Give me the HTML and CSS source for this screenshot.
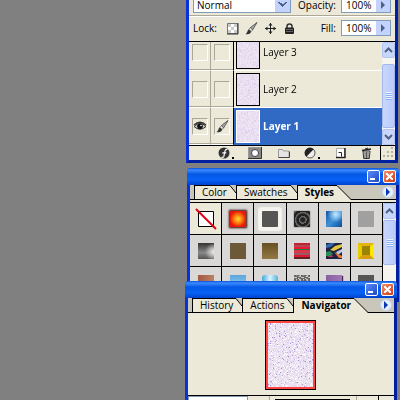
FILE: index.html
```html
<!DOCTYPE html>
<html lang="en">
<head>
  <meta charset="UTF-8">
  <meta name="viewport" content="width=device-width, initial-scale=1.0">
  <title>Palettes</title>
  <link rel="stylesheet" href="styles.css">
</head>
<body>
  <!-- shared icons -->
  <svg class="defs" width="0" height="0" aria-hidden="true">
    <defs>
      <symbol id="up" viewBox="0 0 9 6"><path d="M1 5l3.5-3.5L8 5" fill="none" stroke="#4d6185" stroke-width="2"/></symbol>
      <symbol id="down" viewBox="0 0 9 6"><path d="M1 1l3.5 3.5L8 1" fill="none" stroke="#4d6185" stroke-width="2"/></symbol>
      <symbol id="right" viewBox="0 0 5 8"><path d="M0 0l4 4-4 4z" fill="currentColor"/></symbol>
      <symbol id="brush" viewBox="0 0 13 13">
        <path d="M12 .5L5.500 5.500l2 2.500z" fill="#aaa" stroke="#444" stroke-width=".8"/>
        <path d="M5.500 5.500L4 7.500l2 2 1.500-1.500z" fill="#f4f4f4" stroke="#555" stroke-width=".8"/>
        <path d="M4 7.500C2 8 3 10.500.5 12c2.500.8 5.500 0 5.500-2.500z" fill="#333"/>
      </symbol>
      <symbol id="corner" viewBox="0 0 6 14"><path d="M0 0l6 8v6H0z" fill="#ece9d8"/><path d="M0 .5L6 8" fill="none" stroke="#000"/></symbol>
      <symbol id="slope" viewBox="0 0 14 15"><path d="M0 0l14 15H0z" fill="#ece9d8"/><path d="M0 .5L14 14.500" fill="none" stroke="#000"/></symbol>
    </defs>
  </svg>

  <main class="workspace">
    <section class="palette layers">
      <div class="row blend-row">
        <select class="blend" aria-label="Blend mode"><option>Normal</option></select>
        <label for="opacity">Opacity:</label>
        <div class="spin">
          <input id="opacity" type="text" value="100%">
          <button aria-label="Opacity slider"><svg width="5" height="8"><use href="#right"/></svg></button>
        </div>
      </div>
      <div class="row lock-row">
        <span class="lock-label">Lock:</span>
        <div class="locks">
          <button aria-label="Lock transparency"><svg width="13" height="13" viewBox="0 0 13 13"><path d="M1.500 1.500h10v10h-10z" fill="#fff" stroke="#777"/><path d="M2 2h3v3H2zM8 2h3v3H8zM5 5h3v3H5zM2 8h3v3H2zM8 8h3v3H8z" fill="#ccc"/><path d="M12 1v11H1" fill="none" stroke="#333"/></svg></button>
          <button aria-label="Lock pixels"><svg width="13" height="13"><use href="#brush"/></svg></button>
          <button aria-label="Lock position"><svg width="13" height="13" viewBox="0 0 13 13"><path d="M6.500 1v11M1 6.500h11" stroke="#222"/><path d="M6.500 1l2 2.500h-4zM6.500 12l-2-2.500h4zM1 6.500l2.500-2v4zM12 6.500l-2.500-2v4z" fill="#222"/></svg></button>
          <button aria-label="Lock all"><svg width="13" height="13" viewBox="0 0 13 13"><path d="M4 6V4.500a2.500 2.500 0 0 1 5 0V6" fill="none" stroke="#333" stroke-width="1.500"/><rect x="2" y="5.500" width="9" height="6.500" rx="1" fill="#222"/><path d="M3 7.500h7M3 9.500h7" stroke="#777" stroke-width=".8"/></svg></button>
        </div>
        <label for="fill">Fill:</label>
        <div class="spin">
          <input id="fill" type="text" value="100%">
          <button aria-label="Fill slider"><svg width="5" height="8"><use href="#right"/></svg></button>
        </div>
      </div>
      <div class="list">
        <div class="items">
          <div class="layer">
            <div class="cell"><span class="box"></span></div>
            <div class="cell"><span class="box"></span></div>
            <div class="name"><canvas class="thumb" width="22" height="31"></canvas>Layer 3</div>
          </div>
          <div class="layer">
            <div class="cell"><span class="box"></span></div>
            <div class="cell"><span class="box"></span></div>
            <div class="name"><canvas class="thumb" width="22" height="31"></canvas>Layer 2</div>
          </div>
          <div class="layer selected">
            <div class="cell"><span class="box"><svg width="14" height="10" viewBox="0 0 14 10"><path d="M1 5.500Q7-.5 13 5.500 7 11 1 5.500z" fill="#ccc" stroke="#333"/><path d="M1 4Q7-1.500 13 4" fill="none" stroke="#333" stroke-width="1.200"/><circle cx="7" cy="5.300" r="2.800" fill="#111"/><circle cx="8" cy="4.500" r=".8" fill="#fff"/></svg></span></div>
            <div class="cell"><span class="box"><svg width="13" height="13"><use href="#brush"/></svg></span></div>
            <div class="name"><canvas class="thumb" width="22" height="31"></canvas>Layer 1</div>
          </div>
        </div>
        <div class="scroll">
          <button aria-label="Scroll up"><svg width="9" height="6"><use href="#up"/></svg></button>
          <div class="handle"></div>
          <button aria-label="Scroll down"><svg width="9" height="6"><use href="#down"/></svg></button>
        </div>
      </div>
      <div class="tools">
        <div class="tool-list">
          <button aria-label="Layer style"><svg width="16" height="13" viewBox="0 0 16 13"><circle cx="6" cy="6" r="5.500" fill="#333"/><path d="M9.500 2.500C6.500 1.800 7 5 5.800 9.500 5.500 10.500 4 10.500 3.500 9.800M4.300 5.800h4" fill="none" stroke="#fff" stroke-width="1.200"/><path d="M14 10h2v2h-2z"/></svg></button>
          <button aria-label="Add mask"><svg width="14" height="13" viewBox="0 0 14 13"><path d="M.5.5h13v11H.5z" fill="#888" stroke="#999"/><path d="M13.500 0v11.500H0" fill="none" stroke="#333"/><circle cx="7" cy="6" r="3.500" fill="#fff" stroke="#444"/></svg></button>
          <button aria-label="New group"><svg width="13" height="13" viewBox="0 0 13 13"><path d="M1.500 2.500h4l1 1.500h5.500v6.500H1.500z" fill="#e4e4e4" stroke="#999"/><path d="M1.500 10.500H12.500V4.500" fill="none" stroke="#444"/></svg></button>
          <button aria-label="Adjustment layer"><svg width="16" height="13" viewBox="0 0 16 13"><circle cx="6" cy="6" r="5" fill="#eee" stroke="#555"/><path d="M9.700 2.300A5 5 0 0 0 2.300 9.700z" fill="#222"/><path d="M14 10h2v2h-2z"/></svg></button>
          <button aria-label="New layer"><svg width="12" height="13" viewBox="0 0 12 13"><path d="M1.500 1.500h8v9h-8z" fill="#fff" stroke="#aaa"/><path d="M10 1v9.500H1" fill="none" stroke="#222" stroke-width="1.500"/><path d="M3.500 5.500h3v4" fill="none" stroke="#222"/></svg></button>
          <button aria-label="Delete layer"><svg width="12" height="13" viewBox="0 0 12 13"><path d="M2 4h7l-.7 7.500H2.700z" fill="#ddd" stroke="#333"/><path d="M4 5v6M5.500 5v6M7 5v6" stroke="#222" stroke-width=".7"/><path d="M1 3.500L10 2" stroke="#222" stroke-width="1.500"/><path d="M4 2l3-1" stroke="#222"/></svg></button>
        </div>
        <svg class="grip" width="13" height="13" viewBox="0 0 13 13"><path d="M9 1h2v2H9zM5 5h2v2H5zM9 5h2v2H9zM1 9h2v2H1zM5 9h2v2H5zM9 9h2v2H9z" fill="#b5b19d"/></svg>
      </div>
    </section>

    <section class="palette styles">
      <header class="title">
        <button class="min" aria-label="Minimize"></button>
        <button class="close" aria-label="Close"><svg width="7" height="7" viewBox="0 0 7 7"><path d="M0 0l7 7M7 0L0 7" stroke="#fff" stroke-width="2"/></svg></button>
      </header>
      <nav class="tabs">
        <button class="tab"><span>Color</span><svg width="6" height="14"><use href="#corner"/></svg></button>
        <button class="tab"><span>Swatches</span><svg width="6" height="14"><use href="#corner"/></svg></button>
        <button class="tab active"><span>Styles</span><svg width="14" height="15"><use href="#slope"/></svg></button>
        <button class="menu" aria-label="Palette menu"><svg width="5" height="8"><use href="#right"/></svg></button>
      </nav>
      <div class="list swatch-list">
        <div class="grid">
          <button class="none" aria-label="No style"><svg width="22" height="22" viewBox="0 0 22 22"><path d="M3.500 3.500h15v15h-15z" fill="#fff" stroke="#000"/><path d="M1 1l20 20" stroke="#e00010" stroke-width="2"/></svg></button>
          <button aria-label="Sunset"><i class="sw sunset"></i></button>
          <button aria-label="Outer glow"><i class="sw glow"></i></button>
          <button aria-label="Rings"><i class="sw rings"></i></button>
          <button aria-label="Blue glass"><i class="sw glass"></i></button>
          <button aria-label="Gray"><i class="sw gray"></i></button>
          <button aria-label="Chrome"><i class="sw chrome"></i></button>
          <button aria-label="Brown"><i class="sw brown"></i></button>
          <button aria-label="Bronze"><i class="sw bronze"></i></button>
          <button aria-label="Striped cloth"><i class="sw cloth"></i></button>
          <button aria-label="Abstract"><svg width="16" height="16" viewBox="0 0 16 16"><path d="M0 0h16v16H0z" fill="#1d2040"/><path d="M0 2l5-2h4L5 4 0 5z" fill="#3268a8"/><path d="M4 7l5-4 7-2v3L8 8z" fill="#e0c840"/><path d="M0 9l4-1 3 3-3 2H0z" fill="#278c55"/><path d="M10 9l6-3v3l-4 3z" fill="#b9c9e8"/><path d="M8 9l8 4v2h-3z" fill="#e87a30"/><path d="M1 14l5-2 1 2z" fill="#c3373a"/></svg></button>
          <button aria-label="Gold frame"><svg width="16" height="16" viewBox="0 0 16 16"><path d="M0 0h16v16H0z" fill="#e8cc00"/><path d="M0 0l4 4h8l4-4z" fill="#e4b414"/><path d="M16 0v16l-4-4V4z" fill="#ffe800"/><path d="M0 16l4-4h8l4 4z" fill="#d8a010"/><path d="M4 3h8v9H4z" fill="#9c8408"/></svg></button>
          <button aria-label="Copper"><i class="sw copper"></i></button>
          <button aria-label="Sky"><i class="sw sky"></i></button>
          <button aria-label="Gel"><i class="sw gel"></i></button>
          <button aria-label="Stone"><i class="sw stone"></i></button>
          <button aria-label="Violet"><i class="sw violet"></i></button>
          <button aria-label="Dark"><i class="sw dark"></i></button>
        </div>
        <div class="scroll">
          <button aria-label="Scroll up"><svg width="9" height="6"><use href="#up"/></svg></button>
          <div class="handle short"></div>
        </div>
      </div>
    </section>

    <section class="palette navigator">
      <header class="title">
        <button class="min" aria-label="Minimize"></button>
        <button class="close" aria-label="Close"><svg width="7" height="7" viewBox="0 0 7 7"><path d="M0 0l7 7M7 0L0 7" stroke="#fff" stroke-width="2"/></svg></button>
      </header>
      <nav class="tabs">
        <button class="tab"><span>History</span><svg width="6" height="14"><use href="#corner"/></svg></button>
        <button class="tab"><span>Actions</span><svg width="6" height="14"><use href="#corner"/></svg></button>
        <button class="tab active"><span>Navigator</span><svg width="14" height="15"><use href="#slope"/></svg></button>
        <button class="menu" aria-label="Palette menu"><svg width="5" height="8"><use href="#right"/></svg></button>
      </nav>
      <div class="preview"><canvas class="view" width="49" height="68"></canvas></div>
      <div class="zoom">
        <input type="text" aria-label="Zoom">
        <span class="zoom-out"></span>
        <span class="track"></span>
        <span class="zoom-in"></span>
      </div>
    </section>
  </main>
  <script src="script.js"></script>
</body>
</html>
```

FILE: styles.css
```css
:root {
  --face: #ece9d8;
  --strip: #c9c6bb;
  --line: #000;
  --edge: #0831d9;
}

* {
  box-sizing: border-box;
}

body {
  margin: 0;
  height: 100vh;
  overflow: hidden;
  background: #808080;
  font: 10px/14px "Open Sans", "Noto Sans", sans-serif;
  color: #000;
}

button, input, select {
  margin: 0;
  padding: 0;
  border: 0;
  border-radius: 0;
  background: none;
  font: inherit;
  color: inherit;
}

svg, canvas {
  display: block;
  flex: none;
}

.defs {
  position: absolute;
}

.workspace {
  position: relative;
  height: 100%;
  overflow: hidden;
}

/* floating windows */
.palette {
  position: absolute;
  width: 212px;
  background: var(--face);
  border: 3px solid var(--edge);
  border-right-color: #001ea0;
  border-bottom-color: #001ea0;
}

.layers {
  right: 2px;
  top: -9px;
}

.styles {
  right: 1px;
  top: 168px;
  border-top: 0;
  border-radius: 4px 4px 0 0;
}

.navigator {
  right: 3px;
  top: 281px;
  border-top: 0;
  border-radius: 4px 4px 0 0;
}

/* blend + lock rows */
.row {
  display: flex;
  align-items: center;
  padding: 0 4px;
}

.blend-row {
  height: 22px;
  border-bottom: 1px solid #aca899;
}

.blend {
  width: 98px;
  height: 16px;
  padding-left: 3px;
  line-height: 14px;
  appearance: none;
  border: 1px solid #7f9db9;
  background:
    linear-gradient(45deg, transparent 45%, #4d6185 45% 70%, transparent 70%) right 7px center / 5px 5px no-repeat,
    linear-gradient(-45deg, transparent 45%, #4d6185 45% 70%, transparent 70%) right 3px center / 5px 5px no-repeat,
    linear-gradient(#c3d3fd, #c3d3fd) right / 15px 100% no-repeat,
    #fff;
}

.row label {
  flex: 1;
  padding-right: 5px;
  line-height: 10px;
  text-align: right;
}

.spin {
  display: flex;
  width: 50px;
  height: 16px;
  border: 1px solid #7f9db9;
  background: #fff;
}

.spin input {
  flex: 1;
  min-width: 0;
  padding-left: 4px;
}

.spin button {
  display: grid;
  place-items: center;
  width: 14px;
  background: #c3d3fd;
  color: #4d6185;
}

.lock-row {
  height: 26px;
  padding-bottom: 2px;
  border-top: 1px solid #fff;
  border-bottom: 1px solid var(--line);
}

.lock-label {
  width: 33px;
}

.locks {
  display: flex;
  gap: 6px;
}

/* layer list */
.list {
  display: flex;
}

.list .items {
  flex: 1;
  display: flex;
  flex-direction: column;
  justify-content: flex-end;
  height: 103px;
  overflow: hidden;
}

.layer {
  display: flex;
  flex: none;
  height: 37px;
}

.cell {
  display: grid;
  place-items: center;
  width: 22px;
  border-right: 1px solid #aca899;
  border-bottom: 1px solid #fff;
  box-shadow: inset 0 -1px #aca899;
}

.cell + .cell {
  border-right: 0;
}

.box {
  display: grid;
  place-items: center;
  width: 16px;
  height: 17px;
  border: 1px solid;
  border-color: #aca899 #fff #fff #aca899;
}

.name {
  flex: 1;
  display: flex;
  align-items: center;
  gap: 3px;
  padding-left: 2px;
  border-left: 1px solid var(--line);
  border-bottom: 1px solid #fff;
}

.thumb {
  width: 24px;
  height: 33px;
  border: 1px solid #000;
}

.selected .name {
  background: #316ac5;
  border-bottom-color: #316ac5;
  color: #fff;
  font-weight: bold;
}

.selected .thumb {
  border-color: #fff;
}

/* scrollbars */
.scroll {
  display: flex;
  flex-direction: column;
  width: 13px;
  gap: 1px;
  background: #f5f4ee;
}

.scroll button {
  display: grid;
  place-items: center;
  height: 16px;
  border: 1px solid #b3c5f5;
  border-radius: 2px;
  background: #c8d6fb;
}

.handle {
  flex: 1;
  border: 1px solid #a4b8ee;
  border-radius: 2px;
  background:
    repeating-linear-gradient(#eef4fe 0 1px, #8cb0f8 1px 2px) center / 6px 8px no-repeat,
    linear-gradient(90deg, #c9d6fc, #b9cafb);
}

.layers .handle {
  margin-top: 5px;
}

.handle.short {
  flex: none;
  height: 45px;
}

/* bottom tool strip */
.tools {
  display: flex;
  height: 15px;
  border-top: 1px solid var(--line);
}

.tool-list {
  flex: 1;
  display: flex;
  align-items: center;
  justify-content: space-between;
  padding: 0 7px 0 29px;
  border-right: 1px solid var(--line);
}

.grip {
  margin-left: 1px;
}

/* title bar and tabs */
.title {
  display: flex;
  align-items: center;
  justify-content: flex-end;
  gap: 3px;
  height: 17px;
  margin: 0 -3px;
  padding-right: 3px;
  border-radius: 4px 4px 0 0;
  background: linear-gradient(#0a50d8, #3b8cff 2px, #0558e6 6px, #0662f5 12px, #0040cc);
}

.title button {
  display: grid;
  place-items: center;
  width: 13px;
  height: 13px;
  border: 1px solid #fff;
  border-radius: 2px;
}

.title .min {
  background: linear-gradient(#fff, #fff) 2px 7px / 5px 2px no-repeat, linear-gradient(135deg, #5c8cf5, #1c48cc);
}

.title .close {
  background: linear-gradient(135deg, #f0906c, #d03c14);
}

.tabs {
  display: flex;
  height: 15px;
  padding-left: 4px;
  background: var(--strip);
  box-shadow: inset 0 -1px var(--line);
}

.tab {
  display: flex;
  height: 15px;
  border-bottom: 1px solid var(--line);
  box-shadow: inset 1px 0 var(--line);
}

.tab span {
  height: 100%;
  margin-left: 1px;
  padding: 0 3px 0 7px;
  line-height: 12px;
  border-top: 1px solid var(--line);
  background: var(--face);
}

.tab.active {
  border-bottom: 0;
  font-weight: bold;
}

.tabs .menu {
  display: grid;
  place-items: center;
  width: 12px;
  height: 12px;
  margin: 1px 2px 0 auto;
  padding-left: 1px;
  border: 1px solid #c4d2f0;
  border-radius: 50%;
  background: #e8effc;
  color: #0838b0;
}

/* style swatches */
.swatch-list {
  margin-top: 2px;
  border-top: 1px solid var(--line);
}

.grid {
  flex: 1;
  display: grid;
  grid-template-columns: repeat(6, 1fr);
  grid-auto-rows: 32px;
}

.grid button {
  display: grid;
  place-items: center;
  border-right: 1px solid var(--line);
  border-bottom: 1px solid var(--line);
  background: #d9d8d6;
}

.grid .none {
  background: var(--face);
}

.sw {
  width: 16px;
  height: 16px;
}

.sunset {
  background: radial-gradient(#ffe030, #ff8010 35%, #e81808 70%);
  box-shadow: 0 0 2px 1px #300;
}

.glow {
  background: #555;
  border-radius: 1px;
  box-shadow: 0 0 1px 4px #f4f3ee;
}

.rings {
  background: repeating-radial-gradient(circle at 55% 55%, #222 0 2px, #666 3px 4px);
  box-shadow: 0 0 1px #333;
}

.glass {
  background: radial-gradient(circle at 60% 20%, #c5eaff, transparent 50%), linear-gradient(135deg, #1454a0, #3d92da 50%, #0b4c9c);
}

.gray { background: #a0a0a0; }
.chrome { background: radial-gradient(circle at 100% 55%, #eee, transparent 50%), linear-gradient(#333, #888 60%, #555); }
.brown { background: #6b5937; }
.bronze { background: linear-gradient(#665021, #947846); }

.cloth {
  background: linear-gradient(#c02030 0 2px, #b04858 2px 4px, #f01830 4px 6px, #207838 6px 7px, #d83848 7px 10px, #985868 10px 12px, #e01830 12px 14px, #602028 14px);
}

.copper { background: linear-gradient(100deg, #a05840, #c08868); }
.sky { background: linear-gradient(#5ba5dc, #a5d8fa); }

.gel {
  border-radius: 3px;
  background: linear-gradient(90deg, #40a8d8, #d8f5ff, #58b0dc);
}

.stone { background: repeating-conic-gradient(#666 0 11%, #ccc 15% 20%) 0 0 / 7px 5px; }
.violet { background: linear-gradient(90deg, #8860a0, #a078b8); box-shadow: 1px 1px 1px #412850; }
.dark { background: #555; }

/* navigator */
.preview {
  display: flex;
  justify-content: center;
  padding: 7px 2px 5px 0;
}

.view {
  width: 51px;
  height: 70px;
  border: 1px solid #000;
  outline: 2px solid #f44;
  outline-offset: -3px;
}

.zoom {
  display: grid;
  grid-template-columns: 60px 22px 1fr 23px 15px;
  height: 20px;
  border-top: 1px solid var(--line);
}

.zoom input {
  min-width: 0;
  border: 1px solid #7f9db9;
  background: #fff;
}

.zoom-out {
  border-right: 1px solid #aca899;
}

.track {
  margin: 3px 6px 0 5px;
  border-top: 1px solid #000;
}

.zoom-in {
  border-left: 1px solid #aca899;
  border-right: 1px solid #000;
}
```

FILE: script.js
```javascript
// speckled paper used by every thumbnail
let seed = 7;

function rand() {
  seed = (seed * 16807) % 2147483647;
  return seed / 2147483647;
}

function speckle(canvas, colors, amount) {
  const ctx = canvas.getContext("2d");
  const count = canvas.width * canvas.height * amount;
  for (let i = 0; i < count; i++) {
    ctx.fillStyle = colors[Math.floor(rand() * colors.length)];
    ctx.fillRect(Math.floor(rand() * canvas.width), Math.floor(rand() * canvas.height), 1, 1);
  }
}

document.querySelectorAll("canvas").forEach((canvas) => {
  const ctx = canvas.getContext("2d");
  ctx.fillStyle = "#ebe3f2";
  ctx.fillRect(0, 0, canvas.width, canvas.height);

  if (canvas.className === "view") {
    speckle(canvas, ["#fff", "#f4eef8", "#e6dcf2", "#f0e0ec", "#e2d8ee"], 0.9);
    speckle(canvas, ["#a890dc", "#c4b0e6", "#d8bcdc"], 0.08);
  } else {
    speckle(canvas, ["#e2d6f0", "#f2e8f4", "#dcd0ee", "#eadcec"], 0.7);
  }
});
```
